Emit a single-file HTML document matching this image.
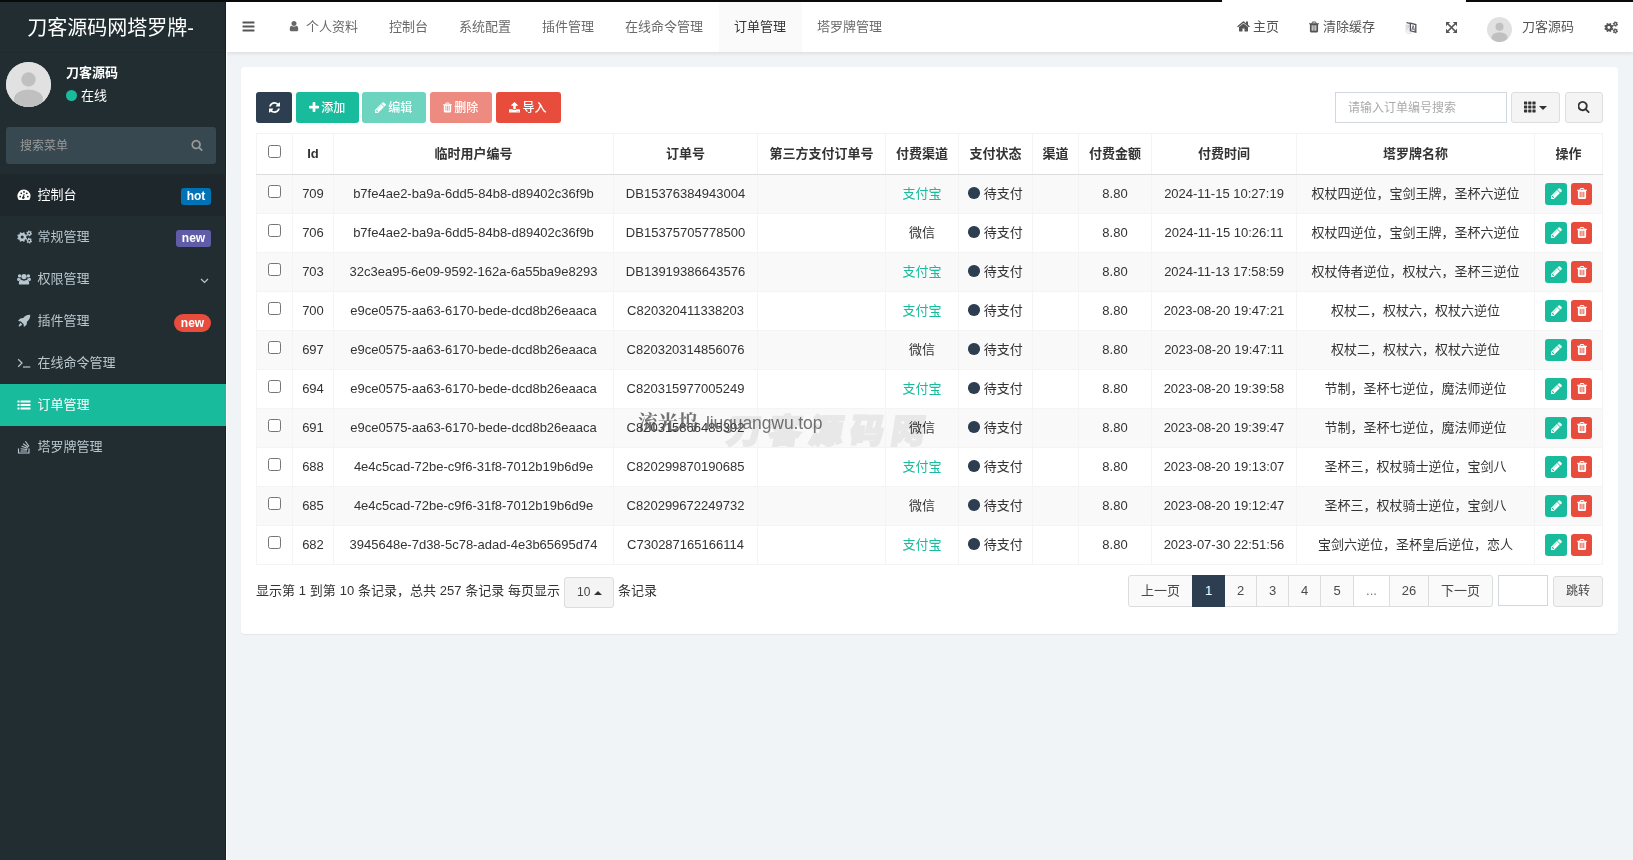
<!DOCTYPE html>
<html lang="zh-CN">
<head>
<meta charset="utf-8">
<title>订单管理</title>
<style>
*{box-sizing:border-box}
html,body{margin:0;padding:0}
body{width:1633px;height:860px;overflow:hidden;background:#f1f4f6;font-family:"Liberation Sans","Noto Sans CJK SC",sans-serif;font-size:13px;color:#333;position:relative;line-height:1.42857}
svg{display:block}
.abs{position:absolute}
/* sidebar */
#side{position:absolute;left:0;top:0;width:226px;height:860px;background:#222d32;color:#fff}
#logo{position:absolute;left:0;top:0;width:226px;height:52px;line-height:56px;text-align:center;font-size:20px;color:#fff;white-space:nowrap;padding-right:5px}
#avatar{position:absolute;left:6px;top:62px;width:45px;height:45px;border-radius:50%;background:#d8d8d8;overflow:hidden}
#uname{position:absolute;left:66px;top:64px;font-weight:bold;font-size:13px;color:#fff;white-space:nowrap}
#ustat{position:absolute;left:66px;top:87px;font-size:13px;color:#fff;white-space:nowrap}
#ustat i{display:inline-block;width:11px;height:11px;border-radius:50%;background:#18bc9c;margin-right:4px;vertical-align:-1px}
#msearch{position:absolute;left:6px;top:127px;width:210px;height:37px;border-radius:3px;background:#374850;color:#999;font-size:12px;line-height:39px;padding-left:14px}
#msearch svg{position:absolute;right:13px;top:12px}
.mi{position:absolute;left:0;width:226px;height:42px;line-height:42px;color:#b8c7ce;font-size:13px;white-space:nowrap}
.mi .ic{position:absolute;left:17px;top:14px;width:14px;height:14px}
.mi .tx{position:absolute;left:37.500px;top:0}
.mi.open{background:#1e282c;color:#fff}
.mi.act{background:#18bc9c;color:#fff}
.bdg{position:absolute;top:14px;height:17px;line-height:17px;font-size:12px;font-weight:bold;color:#fff;border-radius:3px;text-align:center}
/* header */
#hdr{position:absolute;left:226px;top:0;width:1407px;height:52px;background:#fff;box-shadow:0 1px 4px rgba(0,21,41,.12)}
.tab{position:absolute;top:2px;height:50px;line-height:49px;color:#6a6a6a;font-size:13px;white-space:nowrap}
.tab.on{background:#fafafa;color:#333}
.hr{position:absolute;top:2px;height:49px;line-height:50px;color:#555;font-size:13px;white-space:nowrap}
#blk1,#blk2{position:absolute;top:0;height:2px;background:#0a0a0a}
/* panel */
#panel{position:absolute;left:241px;top:67px;width:1377px;height:567px;background:#fff;border-radius:4px;box-shadow:0 1px 1px rgba(0,0,0,.05)}
.btn{position:absolute;top:92px;height:31px;border-radius:3px;color:#fff;font-size:12px;font-weight:500;line-height:33px;white-space:nowrap}
.btn svg{position:absolute}
.gb{background:#f4f4f4;border:1px solid #ddd;border-radius:3px}
#tb{position:absolute;left:256px;top:133px;width:1346px;table-layout:fixed;border-collapse:collapse;font-size:13px;color:#333}
#tb th,#tb td{border:1px solid #f4f4f4;text-align:center;vertical-align:middle;padding:0;white-space:nowrap;overflow:hidden}
#tb th{height:41px;font-weight:bold;color:#333;border-bottom:1px solid #ddd}
#tb td{height:39px}
#tb tbody tr:nth-child(odd){background:#f9f9f9}
.cb{display:inline-block;width:13px;height:13px;border:1px solid #767676;border-radius:2.500px;background:#fff;vertical-align:middle;position:relative;top:-3px}
.ali{color:#18bc9c}
.dot{display:inline-block;width:11.500px;height:11.500px;border-radius:50%;background:#2c3e50;margin-right:4px;vertical-align:-1px}
.ab{display:inline-block;width:22px;height:22px;border-radius:3px;vertical-align:middle;position:relative}
.ab svg{position:absolute;left:5.700px;top:4.700px}
.ab.ed{background:#18bc9c;margin-right:4px}
.ab.dl{background:#e74c3c;width:21px}
#pg span{position:absolute;top:575px;height:32px;border:1px solid #ddd;background:#fafafa;color:#4a4a4a;font-size:13px;line-height:30px;text-align:center;white-space:nowrap}
#pg span.cur{background:#2c3e50;border-color:#2c3e50;color:#fff;z-index:2}
</style>
</head>
<body>
<div id="side">
  <div class="abs" style="left:225px;top:0;width:1px;height:860px;background:#182024"></div>
  <div id="logo">刀客源码网塔罗牌-</div>
  <div id="avatar"><svg width="45" height="45" viewBox="0 0 45 45"><rect width="45" height="45" fill="#e1e1e1"/><circle cx="22.500" cy="17.500" r="7.200" fill="#c0c0c0"/><ellipse cx="22.500" cy="37" rx="14.500" ry="9.500" fill="#c0c0c0"/></svg></div>
  <div id="uname">刀客源码</div>
  <div id="ustat"><i></i>在线</div>
  <div id="msearch">搜索菜单<svg width="12" height="12" viewBox="0 0 1792 1792"><path fill="#999" d="M1216 832q0-185-131.500-316.500t-316.500-131.500-316.500 131.500-131.500 316.500 131.500 316.500 316.500 131.500 316.500-131.500 131.500-316.500zm512 832q0 52-38 90t-90 38q-54 0-90-38l-343-342q-179 124-399 124-143 0-273.500-55.500t-225-150-150-225-55.500-273.500 55.500-273.500 150-225 225-150 273.500-55.500 273.500 55.500 225 150 150 225 55.500 273.500q0 220-124 399l343 343q37 37 37 90z"/></svg></div>
  <div class="mi open" style="top:174px"><svg class="ic" viewBox="0 0 14 14"><path fill="currentColor" d="M7 1.500a6.500 6.500 0 0 1 6.500 6.500c0 1.400-.4 2.600-1.100 3.700a.6.600 0 0 1-.5.300H2.100a.6.600 0 0 1-.5-.3A6.500 6.500 0 0 1 7 1.500z"/><g fill="#1e282c"><circle cx="3.200" cy="8.600" r=".9"/><circle cx="4.300" cy="5.300" r=".9"/><circle cx="7" cy="3.900" r=".9"/><circle cx="9.700" cy="5.300" r=".9"/><circle cx="10.800" cy="8.600" r=".9"/><path d="M7.600 6.200l-.5 2.300a1.300 1.300 0 1 1-1-.2l.5-2.300z"/></g></svg><span class="tx">控制台</span><span class="bdg" style="left:181px;width:30px;background:#0073b7">hot</span></div>
  <div class="mi" style="top:216px"><svg class="ic" style="width:15px" viewBox="0 0 15 14"><path fill="currentColor" fill-rule="evenodd" d="M9.11 7.58L10.07 8.12L9.44 9.65L8.37 9.35L7.55 10.17L7.85 11.24L6.32 11.87L5.78 10.91L4.62 10.91L4.08 11.87L2.55 11.24L2.85 10.17L2.03 9.35L0.96 9.65L0.33 8.12L1.29 7.58L1.29 6.42L0.33 5.88L0.96 4.35L2.03 4.65L2.85 3.83L2.55 2.76L4.08 2.13L4.62 3.09L5.78 3.09L6.32 2.13L7.85 2.76L7.55 3.83L8.37 4.65L9.44 4.35L10.07 5.88L9.11 6.42ZM3.65 7.00a1.55 1.55 0 1 0 3.10 0a1.55 1.55 0 1 0 -3.10 0ZM14.35 3.24L15.09 3.52L14.71 4.75L13.94 4.56L13.33 5.13L13.45 5.92L12.20 6.20L11.98 5.44L11.18 5.19L10.56 5.69L9.69 4.75L10.24 4.18L10.05 3.36L9.31 3.08L9.69 1.85L10.46 2.04L11.07 1.47L10.95 0.68L12.20 0.40L12.42 1.16L13.22 1.41L13.84 0.91L14.71 1.85L14.16 2.42ZM11.35 3.30a0.85 0.85 0 1 0 1.70 0a0.85 0.85 0 1 0 -1.70 0ZM14.35 10.64L15.09 10.92L14.71 12.15L13.94 11.96L13.33 12.53L13.45 13.32L12.20 13.60L11.98 12.84L11.18 12.59L10.56 13.09L9.69 12.15L10.24 11.58L10.05 10.76L9.31 10.48L9.69 9.25L10.46 9.44L11.07 8.87L10.95 8.08L12.20 7.80L12.42 8.56L13.22 8.81L13.84 8.31L14.71 9.25L14.16 9.82ZM11.35 10.70a0.85 0.85 0 1 0 1.70 0a0.85 0.85 0 1 0 -1.70 0Z"/></svg><span class="tx">常规管理</span><span class="bdg" style="left:176px;width:35px;background:#605ca8">new</span></div>
  <div class="mi" style="top:258px"><svg class="ic" viewBox="0 0 14 14"><g fill="currentColor"><circle cx="7" cy="4.600" r="2.600"/><path d="M2.800 12.500c-.6 0-1-.4-1-1 0-2.200.7-4 2.200-4 .7.700 1.800 1.200 3 1.200s2.300-.5 3-1.200c1.500 0 2.200 1.800 2.200 4 0 .6-.4 1-1 1z"/><circle cx="2.600" cy="3.900" r="1.700"/><circle cx="11.400" cy="3.900" r="1.700"/><path d="M.1 7.800c0-1.200.4-2.100 1.200-2.100.4.400.9.600 1.400.6.300 0 .6-.1.900-.2-.1.400-.1.700-.1 1 0 .3 0 .5.100.8-.8 0-1.500.4-1.900 1H1c-.6 0-.9-.4-.9-1.100z"/><path d="M13.900 7.800c0-1.200-.4-2.100-1.200-2.100-.4.400-.9.600-1.400.6-.3 0-.6-.1-.9-.2.100.4.100.7.100 1 0 .3 0 .5-.1.800.8 0 1.500.4 1.900 1h.7c.6 0 .9-.4.900-1.100z"/></g></svg><span class="tx">权限管理</span><svg class="abs" style="left:199.500px;top:18.500px" width="9" height="8" viewBox="0 0 9 8"><path d="M1 2l3.500 3.500L8 2" stroke="#b8c7ce" stroke-width="1.200" fill="none"/></svg></div>
  <div class="mi" style="top:300px"><svg class="ic" viewBox="0 0 14 14"><path fill="currentColor" d="M13.200.8c.2 2.600-.8 5-3.200 7l-.4 3-2.700 2.200-.3-2.800-2.800-2.800L1 7.100l2.200-2.700 3-.4c2-2.400 4.400-3.400 7-3.200zM3.300 8.700l2 2-2.900 1.800c-.4.200-.9-.3-.7-.7z"/></svg><span class="tx">插件管理</span><span class="bdg" style="left:174px;width:37px;height:18px;line-height:18px;background:#e74c3c;border-radius:9px">new</span></div>
  <div class="mi" style="top:342px"><svg class="ic" viewBox="0 0 14 14"><path d="M1.200 3.300l3.800 3.700-3.800 3.700" stroke="currentColor" stroke-width="1.200" fill="none"/><path d="M6 11h7.300" stroke="currentColor" stroke-width="1.200"/></svg><span class="tx">在线命令管理</span></div>
  <div class="mi act" style="top:384px"><svg class="ic" viewBox="0 0 14 14"><g fill="currentColor"><rect x="0.500" y="2.500" width="2" height="2" rx=".3"/><rect x="0.500" y="6" width="2" height="2" rx=".3"/><rect x="0.500" y="9.500" width="2" height="2" rx=".3"/><rect x="3.500" y="2.500" width="10" height="2" rx=".3"/><rect x="3.500" y="6" width="10" height="2" rx=".3"/><rect x="3.500" y="9.500" width="10" height="2" rx=".3"/></g></svg><span class="tx">订单管理</span></div>
  <div class="mi" style="top:426px"><svg class="ic" viewBox="0 0 14 14"><g fill="none" stroke="currentColor" stroke-width="1.100"><path d="M1.500 8.500v4.500h10.500v-4.500"/><path d="M3.500 11h6.500M3.700 8.700l6.400.8M4.600 6.200l5.900 2.100M6.100 3.700l5.100 3.600M8.300 1.300l3.700 5.100"/></g></svg><span class="tx">塔罗牌管理</span></div>
</div>
<div id="hdr">
  <svg class="abs" style="left:16px;top:21px" width="13" height="11" viewBox="0 0 13 11"><g fill="#555"><rect x="0.500" y="0.600" width="12" height="1.900" rx=".4"/><rect x="0.500" y="4.600" width="12" height="1.900" rx=".4"/><rect x="0.500" y="8.600" width="12" height="1.900" rx=".4"/></g></svg>
  <div class="tab" style="left:49px;width:98px"><svg class="abs" style="left:14px;top:19px" width="10" height="11" viewBox="0 0 1408 1664"><path fill="#666" transform="translate(-192,-128)" d="M1536 1399q0 109-62.500 187t-150.500 78h-854q-88 0-150.500-78t-62.500-187q0-85 8.500-160.500t31.500-152 58.500-131 94-89 134.500-34.500q131 128 313 128t313-128q76 0 134.500 34.500t94 89 58.500 131 31.500 152 8.500 160.500zm-256-887q0 159-112.500 271.500t-271.500 112.500-271.500-112.500-112.500-271.500 112.500-271.500 271.500-112.500 271.500 112.500 112.500 271.500z"/></svg><span class="abs" style="left:31px">个人资料</span></div>
  <div class="tab" style="left:148px;width:69px;padding-left:15px">控制台</div>
  <div class="tab" style="left:218px;width:82px;padding-left:15px">系统配置</div>
  <div class="tab" style="left:301px;width:82px;padding-left:15px">插件管理</div>
  <div class="tab" style="left:384px;width:108px;padding-left:15px">在线命令管理</div>
  <div class="tab on" style="left:493px;width:83px;padding-left:15px">订单管理</div>
  <div class="tab" style="left:576px;width:95px;padding-left:15px">塔罗牌管理</div>
  <!-- right -->
  <div class="hr" style="left:1011px"><svg class="abs" style="left:0;top:19px" width="13" height="11" viewBox="0 0 1664 1312"><path fill="#555" transform="translate(-64,-256)" d="M1472 992v480q0 26-19 45t-45 19h-384v-384h-256v384h-384q-26 0-45-19t-19-45v-480q0-1 .5-3t.5-3l575-474 575 474q1 2 1 6zm223-69l-62 74q-8 9-21 11h-3q-13 0-21-7l-692-577-692 577q-12 8-24 7-13-2-21-11l-62-74q-8-10-7-23.500t11-21.500l719-599q32-26 76-26t76 26l244 204v-195q0-14 9-23t23-9h192q14 0 23 9t9 23v408l219 182q10 8 11 21.500t-7 23.500z"/></svg><span class="abs" style="left:16px">主页</span></div>
  <div class="hr" style="left:1083px"><svg class="abs" style="left:0;top:19px" width="10" height="12" viewBox="0 0 1408 1536"><path fill="#555" transform="translate(-192,-128)" d="M704 1376v-704q0-14-9-23t-23-9h-64q-14 0-23 9t-9 23v704q0 14 9 23t23 9h64q14 0 23-9t9-23zm256 0v-704q0-14-9-23t-23-9h-64q-14 0-23 9t-9 23v704q0 14 9 23t23 9h64q14 0 23-9t9-23zm256 0v-704q0-14-9-23t-23-9h-64q-14 0-23 9t-9 23v704q0 14 9 23t23 9h64q14 0 23-9t9-23zm-544-992h448l-48-117q-7-9-17-11h-317q-10 2-17 11zm928 32v64q0 14-9 23t-23 9h-96v948q0 83-47 143.500t-113 60.500h-832q-66 0-113-58.500t-47-141.500v-952h-96q-14 0-23-9t-9-23v-64q0-14 9-23t23-9h309l70-167q15-37 54-63t79-26h320q40 0 79 26t54 63l70 167h309q14 0 23 9t9 23z"/></svg><span class="abs" style="left:14px">清除缓存</span></div>
  <svg class="abs" style="left:1178px;top:21px" width="13" height="13" viewBox="0 0 13 13"><path d="M1 3.500l5-1v8.500l-5 .8z" fill="#eceef3"/><path d="M2.500 0.800l3.800 1.300v1.200l-3.800-1z" fill="#666"/><path d="M2.400 8.500c1.300-.8 2-2 2.300-3.500M2 5h3.200" stroke="#b9bfd0" stroke-width=".8" fill="none"/><path d="M6.400 2.200l5.400 1.400v7.600l-5.400-1.400z" fill="#fff" stroke="#555" stroke-width="1.300"/><path d="M7.700 9.300l1.400-4.800 1.500 5.200M8.200 7.800l1.900.5" stroke="#667" stroke-width=".9" fill="none"/><path d="M3 12.200h4l1.200-1" stroke="#ccd" stroke-width=".7" fill="none"/></svg>
  <svg class="abs" style="left:1220px;top:22px" width="11" height="11" viewBox="0 0 11 11"><g fill="#555"><path d="M0 0h4.200l-4.200 4.200z"/><path d="M11 0v4.200l-4.200-4.200z"/><path d="M0 11v-4.200l4.200 4.200z"/><path d="M11 11h-4.200l4.200-4.200z"/></g><path d="M2 2l7 7M9 2l-7 7" stroke="#555" stroke-width="1.700"/></svg>
  <div class="abs" style="left:1261px;top:17px;width:25px;height:25px;border-radius:50%;overflow:hidden"><svg width="25" height="25" viewBox="0 0 45 45"><rect width="45" height="45" fill="#e1e1e1"/><circle cx="22.500" cy="17.500" r="7.200" fill="#c0c0c0"/><ellipse cx="22.500" cy="37" rx="14.500" ry="9.500" fill="#c0c0c0"/></svg></div>
  <div class="hr" style="left:1296px">刀客源码</div>
  <svg class="abs" style="left:1378px;top:21px" width="14" height="13" viewBox="0 0 15 14"><path fill="#555" fill-rule="evenodd" d="M9.11 7.58L10.07 8.12L9.44 9.65L8.37 9.35L7.55 10.17L7.85 11.24L6.32 11.87L5.78 10.91L4.62 10.91L4.08 11.87L2.55 11.24L2.85 10.17L2.03 9.35L0.96 9.65L0.33 8.12L1.29 7.58L1.29 6.42L0.33 5.88L0.96 4.35L2.03 4.65L2.85 3.83L2.55 2.76L4.08 2.13L4.62 3.09L5.78 3.09L6.32 2.13L7.85 2.76L7.55 3.83L8.37 4.65L9.44 4.35L10.07 5.88L9.11 6.42ZM3.65 7.00a1.55 1.55 0 1 0 3.10 0a1.55 1.55 0 1 0 -3.10 0ZM14.35 3.24L15.09 3.52L14.71 4.75L13.94 4.56L13.33 5.13L13.45 5.92L12.20 6.20L11.98 5.44L11.18 5.19L10.56 5.69L9.69 4.75L10.24 4.18L10.05 3.36L9.31 3.08L9.69 1.85L10.46 2.04L11.07 1.47L10.95 0.68L12.20 0.40L12.42 1.16L13.22 1.41L13.84 0.91L14.71 1.85L14.16 2.42ZM11.35 3.30a0.85 0.85 0 1 0 1.70 0a0.85 0.85 0 1 0 -1.70 0ZM14.35 10.64L15.09 10.92L14.71 12.15L13.94 11.96L13.33 12.53L13.45 13.32L12.20 13.60L11.98 12.84L11.18 12.59L10.56 13.09L9.69 12.15L10.24 11.58L10.05 10.76L9.31 10.48L9.69 9.25L10.46 9.44L11.07 8.87L10.95 8.08L12.20 7.80L12.42 8.56L13.22 8.81L13.84 8.31L14.71 9.25L14.16 9.82ZM11.35 10.70a0.85 0.85 0 1 0 1.70 0a0.85 0.85 0 1 0 -1.70 0Z"/></svg>
</div>
<div class="abs" style="left:0;top:52px;width:225px;height:1px;background:rgba(0,0,0,.07)"></div>
<div class="abs" style="left:226px;top:52px;width:1px;height:808px;background:#fff"></div>
<div id="blk1" style="left:0;width:1222px"></div>
<div id="blk2" style="left:1466px;width:167px"></div>
<div id="panel"></div>
<div class="btn" style="left:256px;width:36px;background:#2c3e50"><svg style="left:12.500px;top:9.500px" width="11" height="11" viewBox="0 0 1536 1536"><path fill="#fff" transform="translate(-128,-128)" d="M1639 1056q0 5-1 7-64 268-268 434.500t-478 166.500q-146 0-282.500-55t-243.500-157l-129 129q-19 19-45 19t-45-19-19-45v-448q0-26 19-45t45-19h448q26 0 45 19t19 45-19 45l-137 137q71 66 161 102t187 36q134 0 250-65t186-179q11-17 53-117 8-23 30-23h192q13 0 22.500 9.500t9.500 22.500zm25-800v448q0 26-19 45t-45 19h-448q-26 0-45-19t-19-45 19-45l138-138q-148-137-349-137-134 0-250 65t-186 179q-11 17-53 117-8 23-30 23h-199q-13 0-22.500-9.500t-9.500-22.500v-7q65-268 270-434.500t480-166.500q146 0 284 55.500t245 156.500l130-129q19-19 45-19t45 19 19 45z"/></svg></div>
<div class="btn" style="left:296px;width:63px;background:#18bc9c"><svg style="left:13px;top:10px" width="10" height="11" viewBox="0 0 1408 1408"><path fill="#fff" transform="translate(-192,-192)" d="M1600 736v192q0 40-28 68t-68 28h-416v416q0 40-28 68t-68 28h-192q-40 0-68-28t-28-68v-416h-416q-40 0-68-28t-28-68v-192q0-40 28-68t68-28h416v-416q0-40 28-68t68-28h192q40 0 68 28t28 68v416h416q40 0 68 28t28 68z"/></svg><span class="abs" style="left:25.300px">添加</span></div>
<div class="btn" style="left:362px;width:64px;background:#6dd4c0"><svg style="left:13px;top:10px" width="11" height="11" viewBox="0 0 1536 1536"><path fill="#fff" transform="translate(-128,-128)" d="M491 1536l91-91-235-235-91 91v107h128v128h107zm523-928q0-22-22-22-10 0-17 7l-542 542q-7 7-7 17 0 22 22 22 10 0 17-7l542-542q7-7 7-17zm-54-192l416 416-832 832h-416v-416zm683 96q0 53-37 90l-166 166-416-416 166-165q36-38 90-38 53 0 91 38l235 234q37 39 37 91z"/></svg><span class="abs" style="left:26.300px">编辑</span></div>
<div class="btn" style="left:430px;width:62px;background:#ee8b81"><svg style="left:13px;top:10px" width="9" height="11" viewBox="0 0 1408 1536"><path fill="#fff" transform="translate(-192,-128)" d="M704 1376v-704q0-14-9-23t-23-9h-64q-14 0-23 9t-9 23v704q0 14 9 23t23 9h64q14 0 23-9t9-23zm256 0v-704q0-14-9-23t-23-9h-64q-14 0-23 9t-9 23v704q0 14 9 23t23 9h64q14 0 23-9t9-23zm256 0v-704q0-14-9-23t-23-9h-64q-14 0-23 9t-9 23v704q0 14 9 23t23 9h64q14 0 23-9t9-23zm-544-992h448l-48-117q-7-9-17-11h-317q-10 2-17 11zm928 32v64q0 14-9 23t-23 9h-96v948q0 83-47 143.500t-113 60.500h-832q-66 0-113-58.500t-47-141.500v-952h-96q-14 0-23-9t-9-23v-64q0-14 9-23t23-9h309l70-167q15-37 54-63t79-26h320q40 0 79 26t54 63l70 167h309q14 0 23 9t9 23z"/></svg><span class="abs" style="left:24.300px">删除</span></div>
<div class="btn" style="left:496px;width:65px;background:#e74c3c"><svg style="left:13px;top:10px" width="11" height="11" viewBox="0 0 1664 1664"><path fill="#fff" transform="translate(-64,-64)" d="M1344 1472q0-26-19-45t-45-19-45 19-19 45 19 45 45 19 45-19 19-45zm256 0q0-26-19-45t-45-19-45 19-19 45 19 45 45 19 45-19 19-45zm128-224v320q0 40-28 68t-68 28h-1472q-40 0-68-28t-28-68v-320q0-40 28-68t68-28h427q21 56 70.500 92t110.500 36h256q61 0 110.500-36t70.500-92h427q40 0 68 28t28 68zm-325-648q-17 40-59 40h-256v448q0 26-19 45t-45 19h-256q-26 0-45-19t-19-45v-448h-256q-42 0-59-40-17-39 14-69l448-448q18-19 45-19t45 19l448 448q31 30 14 69z"/></svg><span class="abs" style="left:26.500px">导入</span></div>
<div class="abs" style="left:1335px;top:92px;width:172px;height:31px;border:1px solid #d2d6de;background:#fff;color:#aaa;font-size:12px;line-height:31px;padding-left:12px;white-space:nowrap">请输入订单编号搜索</div>
<div class="abs gb" style="left:1511px;top:92px;width:49px;height:31px"><svg class="abs" style="left:12px;top:8px" width="12" height="12" viewBox="0 0 12 12"><g fill="#333"><rect x="0" y="0.500" width="3.200" height="3" rx=".4"/><rect x="4.200" y="0.500" width="3.200" height="3" rx=".4"/><rect x="8.400" y="0.500" width="3.200" height="3" rx=".4"/><rect x="0" y="4.500" width="3.200" height="3" rx=".4"/><rect x="4.200" y="4.500" width="3.200" height="3" rx=".4"/><rect x="8.400" y="4.500" width="3.200" height="3" rx=".4"/><rect x="0" y="8.500" width="3.200" height="3" rx=".4"/><rect x="4.200" y="8.500" width="3.200" height="3" rx=".4"/><rect x="8.400" y="8.500" width="3.200" height="3" rx=".4"/></g></svg><svg class="abs" style="left:27px;top:13px" width="8" height="4" viewBox="0 0 8 4"><path d="M0 0h8l-4 4z" fill="#333"/></svg></div>
<div class="abs gb" style="left:1565px;top:92px;width:38px;height:31px"><svg class="abs" style="left:12px;top:8px" width="12" height="12" viewBox="0 0 1664 1664"><path fill="#333" transform="translate(-128,-128)" d="M1216 832q0-185-131.500-316.500t-316.500-131.500-316.500 131.500-131.500 316.500 131.500 316.500 316.500 131.500 316.500-131.500 131.500-316.500zm512 832q0 52-38 90t-90 38q-54 0-90-38l-343-342q-179 124-399 124-143 0-273.500-55.500t-225-150-150-225-55.500-273.500 55.500-273.500 150-225 225-150 273.500-55.500 273.500 55.500 225 150 150 225 55.500 273.500q0 220-124 399l343 343q37 37 37 90z"/></svg></div>
<table id="tb"><colgroup><col style="width:36px"><col style="width:41px"><col style="width:280px"><col style="width:144px"><col style="width:128px"><col style="width:73px"><col style="width:74px"><col style="width:46px"><col style="width:73px"><col style="width:145px"><col style="width:238px"><col style="width:68px"></colgroup>
<thead><tr><th><span class="cb"></span></th><th>Id</th><th>临时用户编号</th><th>订单号</th><th>第三方支付订单号</th><th>付费渠道</th><th>支付状态</th><th>渠道</th><th>付费金额</th><th>付费时间</th><th>塔罗牌名称</th><th>操作</th></tr></thead><tbody>
<tr><td><span class="cb"></span></td><td>709</td><td>b7fe4ae2-ba9a-6dd5-84b8-d89402c36f9b</td><td>DB15376384943004</td><td></td><td><span class="ali">支付宝</span></td><td><i class="dot"></i>待支付</td><td></td><td>8.80</td><td>2024-11-15 10:27:19</td><td>权杖四逆位，宝剑王牌，圣杯六逆位</td><td><span class="ab ed"><svg width="11" height="11" viewBox="0 0 1536 1536"><path fill="#fff" transform="translate(-128,-128)" d="M491 1536l91-91-235-235-91 91v107h128v128h107zm523-928q0-22-22-22-10 0-17 7l-542 542q-7 7-7 17 0 22 22 22 10 0 17-7l542-542q7-7 7-17zm-54-192l416 416-832 832h-416v-416zm683 96q0 53-37 90l-166 166-416-416 166-165q36-38 90-38 53 0 91 38l235 234q37 39 37 91z"/></svg></span><span class="ab dl"><svg width="10" height="11" viewBox="0 0 1408 1536"><path fill="#fff" transform="translate(-192,-128)" d="M704 1376v-704q0-14-9-23t-23-9h-64q-14 0-23 9t-9 23v704q0 14 9 23t23 9h64q14 0 23-9t9-23zm256 0v-704q0-14-9-23t-23-9h-64q-14 0-23 9t-9 23v704q0 14 9 23t23 9h64q14 0 23-9t9-23zm256 0v-704q0-14-9-23t-23-9h-64q-14 0-23 9t-9 23v704q0 14 9 23t23 9h64q14 0 23-9t9-23zm-544-992h448l-48-117q-7-9-17-11h-317q-10 2-17 11zm928 32v64q0 14-9 23t-23 9h-96v948q0 83-47 143.500t-113 60.500h-832q-66 0-113-58.500t-47-141.500v-952h-96q-14 0-23-9t-9-23v-64q0-14 9-23t23-9h309l70-167q15-37 54-63t79-26h320q40 0 79 26t54 63l70 167h309q14 0 23 9t9 23z"/></svg></span></td></tr>
<tr><td><span class="cb"></span></td><td>706</td><td>b7fe4ae2-ba9a-6dd5-84b8-d89402c36f9b</td><td>DB15375705778500</td><td></td><td>微信</td><td><i class="dot"></i>待支付</td><td></td><td>8.80</td><td>2024-11-15 10:26:11</td><td>权杖四逆位，宝剑王牌，圣杯六逆位</td><td><span class="ab ed"><svg width="11" height="11" viewBox="0 0 1536 1536"><path fill="#fff" transform="translate(-128,-128)" d="M491 1536l91-91-235-235-91 91v107h128v128h107zm523-928q0-22-22-22-10 0-17 7l-542 542q-7 7-7 17 0 22 22 22 10 0 17-7l542-542q7-7 7-17zm-54-192l416 416-832 832h-416v-416zm683 96q0 53-37 90l-166 166-416-416 166-165q36-38 90-38 53 0 91 38l235 234q37 39 37 91z"/></svg></span><span class="ab dl"><svg width="10" height="11" viewBox="0 0 1408 1536"><path fill="#fff" transform="translate(-192,-128)" d="M704 1376v-704q0-14-9-23t-23-9h-64q-14 0-23 9t-9 23v704q0 14 9 23t23 9h64q14 0 23-9t9-23zm256 0v-704q0-14-9-23t-23-9h-64q-14 0-23 9t-9 23v704q0 14 9 23t23 9h64q14 0 23-9t9-23zm256 0v-704q0-14-9-23t-23-9h-64q-14 0-23 9t-9 23v704q0 14 9 23t23 9h64q14 0 23-9t9-23zm-544-992h448l-48-117q-7-9-17-11h-317q-10 2-17 11zm928 32v64q0 14-9 23t-23 9h-96v948q0 83-47 143.500t-113 60.500h-832q-66 0-113-58.500t-47-141.500v-952h-96q-14 0-23-9t-9-23v-64q0-14 9-23t23-9h309l70-167q15-37 54-63t79-26h320q40 0 79 26t54 63l70 167h309q14 0 23 9t9 23z"/></svg></span></td></tr>
<tr><td><span class="cb"></span></td><td>703</td><td>32c3ea95-6e09-9592-162a-6a55ba9e8293</td><td>DB13919386643576</td><td></td><td><span class="ali">支付宝</span></td><td><i class="dot"></i>待支付</td><td></td><td>8.80</td><td>2024-11-13 17:58:59</td><td>权杖侍者逆位，权杖六，圣杯三逆位</td><td><span class="ab ed"><svg width="11" height="11" viewBox="0 0 1536 1536"><path fill="#fff" transform="translate(-128,-128)" d="M491 1536l91-91-235-235-91 91v107h128v128h107zm523-928q0-22-22-22-10 0-17 7l-542 542q-7 7-7 17 0 22 22 22 10 0 17-7l542-542q7-7 7-17zm-54-192l416 416-832 832h-416v-416zm683 96q0 53-37 90l-166 166-416-416 166-165q36-38 90-38 53 0 91 38l235 234q37 39 37 91z"/></svg></span><span class="ab dl"><svg width="10" height="11" viewBox="0 0 1408 1536"><path fill="#fff" transform="translate(-192,-128)" d="M704 1376v-704q0-14-9-23t-23-9h-64q-14 0-23 9t-9 23v704q0 14 9 23t23 9h64q14 0 23-9t9-23zm256 0v-704q0-14-9-23t-23-9h-64q-14 0-23 9t-9 23v704q0 14 9 23t23 9h64q14 0 23-9t9-23zm256 0v-704q0-14-9-23t-23-9h-64q-14 0-23 9t-9 23v704q0 14 9 23t23 9h64q14 0 23-9t9-23zm-544-992h448l-48-117q-7-9-17-11h-317q-10 2-17 11zm928 32v64q0 14-9 23t-23 9h-96v948q0 83-47 143.500t-113 60.500h-832q-66 0-113-58.500t-47-141.500v-952h-96q-14 0-23-9t-9-23v-64q0-14 9-23t23-9h309l70-167q15-37 54-63t79-26h320q40 0 79 26t54 63l70 167h309q14 0 23 9t9 23z"/></svg></span></td></tr>
<tr><td><span class="cb"></span></td><td>700</td><td>e9ce0575-aa63-6170-bede-dcd8b26eaaca</td><td>C820320411338203</td><td></td><td><span class="ali">支付宝</span></td><td><i class="dot"></i>待支付</td><td></td><td>8.80</td><td>2023-08-20 19:47:21</td><td>权杖二，权杖六，权杖六逆位</td><td><span class="ab ed"><svg width="11" height="11" viewBox="0 0 1536 1536"><path fill="#fff" transform="translate(-128,-128)" d="M491 1536l91-91-235-235-91 91v107h128v128h107zm523-928q0-22-22-22-10 0-17 7l-542 542q-7 7-7 17 0 22 22 22 10 0 17-7l542-542q7-7 7-17zm-54-192l416 416-832 832h-416v-416zm683 96q0 53-37 90l-166 166-416-416 166-165q36-38 90-38 53 0 91 38l235 234q37 39 37 91z"/></svg></span><span class="ab dl"><svg width="10" height="11" viewBox="0 0 1408 1536"><path fill="#fff" transform="translate(-192,-128)" d="M704 1376v-704q0-14-9-23t-23-9h-64q-14 0-23 9t-9 23v704q0 14 9 23t23 9h64q14 0 23-9t9-23zm256 0v-704q0-14-9-23t-23-9h-64q-14 0-23 9t-9 23v704q0 14 9 23t23 9h64q14 0 23-9t9-23zm256 0v-704q0-14-9-23t-23-9h-64q-14 0-23 9t-9 23v704q0 14 9 23t23 9h64q14 0 23-9t9-23zm-544-992h448l-48-117q-7-9-17-11h-317q-10 2-17 11zm928 32v64q0 14-9 23t-23 9h-96v948q0 83-47 143.500t-113 60.500h-832q-66 0-113-58.500t-47-141.500v-952h-96q-14 0-23-9t-9-23v-64q0-14 9-23t23-9h309l70-167q15-37 54-63t79-26h320q40 0 79 26t54 63l70 167h309q14 0 23 9t9 23z"/></svg></span></td></tr>
<tr><td><span class="cb"></span></td><td>697</td><td>e9ce0575-aa63-6170-bede-dcd8b26eaaca</td><td>C820320314856076</td><td></td><td>微信</td><td><i class="dot"></i>待支付</td><td></td><td>8.80</td><td>2023-08-20 19:47:11</td><td>权杖二，权杖六，权杖六逆位</td><td><span class="ab ed"><svg width="11" height="11" viewBox="0 0 1536 1536"><path fill="#fff" transform="translate(-128,-128)" d="M491 1536l91-91-235-235-91 91v107h128v128h107zm523-928q0-22-22-22-10 0-17 7l-542 542q-7 7-7 17 0 22 22 22 10 0 17-7l542-542q7-7 7-17zm-54-192l416 416-832 832h-416v-416zm683 96q0 53-37 90l-166 166-416-416 166-165q36-38 90-38 53 0 91 38l235 234q37 39 37 91z"/></svg></span><span class="ab dl"><svg width="10" height="11" viewBox="0 0 1408 1536"><path fill="#fff" transform="translate(-192,-128)" d="M704 1376v-704q0-14-9-23t-23-9h-64q-14 0-23 9t-9 23v704q0 14 9 23t23 9h64q14 0 23-9t9-23zm256 0v-704q0-14-9-23t-23-9h-64q-14 0-23 9t-9 23v704q0 14 9 23t23 9h64q14 0 23-9t9-23zm256 0v-704q0-14-9-23t-23-9h-64q-14 0-23 9t-9 23v704q0 14 9 23t23 9h64q14 0 23-9t9-23zm-544-992h448l-48-117q-7-9-17-11h-317q-10 2-17 11zm928 32v64q0 14-9 23t-23 9h-96v948q0 83-47 143.500t-113 60.500h-832q-66 0-113-58.500t-47-141.500v-952h-96q-14 0-23-9t-9-23v-64q0-14 9-23t23-9h309l70-167q15-37 54-63t79-26h320q40 0 79 26t54 63l70 167h309q14 0 23 9t9 23z"/></svg></span></td></tr>
<tr><td><span class="cb"></span></td><td>694</td><td>e9ce0575-aa63-6170-bede-dcd8b26eaaca</td><td>C820315977005249</td><td></td><td><span class="ali">支付宝</span></td><td><i class="dot"></i>待支付</td><td></td><td>8.80</td><td>2023-08-20 19:39:58</td><td>节制，圣杯七逆位，魔法师逆位</td><td><span class="ab ed"><svg width="11" height="11" viewBox="0 0 1536 1536"><path fill="#fff" transform="translate(-128,-128)" d="M491 1536l91-91-235-235-91 91v107h128v128h107zm523-928q0-22-22-22-10 0-17 7l-542 542q-7 7-7 17 0 22 22 22 10 0 17-7l542-542q7-7 7-17zm-54-192l416 416-832 832h-416v-416zm683 96q0 53-37 90l-166 166-416-416 166-165q36-38 90-38 53 0 91 38l235 234q37 39 37 91z"/></svg></span><span class="ab dl"><svg width="10" height="11" viewBox="0 0 1408 1536"><path fill="#fff" transform="translate(-192,-128)" d="M704 1376v-704q0-14-9-23t-23-9h-64q-14 0-23 9t-9 23v704q0 14 9 23t23 9h64q14 0 23-9t9-23zm256 0v-704q0-14-9-23t-23-9h-64q-14 0-23 9t-9 23v704q0 14 9 23t23 9h64q14 0 23-9t9-23zm256 0v-704q0-14-9-23t-23-9h-64q-14 0-23 9t-9 23v704q0 14 9 23t23 9h64q14 0 23-9t9-23zm-544-992h448l-48-117q-7-9-17-11h-317q-10 2-17 11zm928 32v64q0 14-9 23t-23 9h-96v948q0 83-47 143.500t-113 60.500h-832q-66 0-113-58.500t-47-141.500v-952h-96q-14 0-23-9t-9-23v-64q0-14 9-23t23-9h309l70-167q15-37 54-63t79-26h320q40 0 79 26t54 63l70 167h309q14 0 23 9t9 23z"/></svg></span></td></tr>
<tr><td><span class="cb"></span></td><td>691</td><td>e9ce0575-aa63-6170-bede-dcd8b26eaaca</td><td>C820315866485392</td><td></td><td>微信</td><td><i class="dot"></i>待支付</td><td></td><td>8.80</td><td>2023-08-20 19:39:47</td><td>节制，圣杯七逆位，魔法师逆位</td><td><span class="ab ed"><svg width="11" height="11" viewBox="0 0 1536 1536"><path fill="#fff" transform="translate(-128,-128)" d="M491 1536l91-91-235-235-91 91v107h128v128h107zm523-928q0-22-22-22-10 0-17 7l-542 542q-7 7-7 17 0 22 22 22 10 0 17-7l542-542q7-7 7-17zm-54-192l416 416-832 832h-416v-416zm683 96q0 53-37 90l-166 166-416-416 166-165q36-38 90-38 53 0 91 38l235 234q37 39 37 91z"/></svg></span><span class="ab dl"><svg width="10" height="11" viewBox="0 0 1408 1536"><path fill="#fff" transform="translate(-192,-128)" d="M704 1376v-704q0-14-9-23t-23-9h-64q-14 0-23 9t-9 23v704q0 14 9 23t23 9h64q14 0 23-9t9-23zm256 0v-704q0-14-9-23t-23-9h-64q-14 0-23 9t-9 23v704q0 14 9 23t23 9h64q14 0 23-9t9-23zm256 0v-704q0-14-9-23t-23-9h-64q-14 0-23 9t-9 23v704q0 14 9 23t23 9h64q14 0 23-9t9-23zm-544-992h448l-48-117q-7-9-17-11h-317q-10 2-17 11zm928 32v64q0 14-9 23t-23 9h-96v948q0 83-47 143.500t-113 60.500h-832q-66 0-113-58.500t-47-141.500v-952h-96q-14 0-23-9t-9-23v-64q0-14 9-23t23-9h309l70-167q15-37 54-63t79-26h320q40 0 79 26t54 63l70 167h309q14 0 23 9t9 23z"/></svg></span></td></tr>
<tr><td><span class="cb"></span></td><td>688</td><td>4e4c5cad-72be-c9f6-31f8-7012b19b6d9e</td><td>C820299870190685</td><td></td><td><span class="ali">支付宝</span></td><td><i class="dot"></i>待支付</td><td></td><td>8.80</td><td>2023-08-20 19:13:07</td><td>圣杯三，权杖骑士逆位，宝剑八</td><td><span class="ab ed"><svg width="11" height="11" viewBox="0 0 1536 1536"><path fill="#fff" transform="translate(-128,-128)" d="M491 1536l91-91-235-235-91 91v107h128v128h107zm523-928q0-22-22-22-10 0-17 7l-542 542q-7 7-7 17 0 22 22 22 10 0 17-7l542-542q7-7 7-17zm-54-192l416 416-832 832h-416v-416zm683 96q0 53-37 90l-166 166-416-416 166-165q36-38 90-38 53 0 91 38l235 234q37 39 37 91z"/></svg></span><span class="ab dl"><svg width="10" height="11" viewBox="0 0 1408 1536"><path fill="#fff" transform="translate(-192,-128)" d="M704 1376v-704q0-14-9-23t-23-9h-64q-14 0-23 9t-9 23v704q0 14 9 23t23 9h64q14 0 23-9t9-23zm256 0v-704q0-14-9-23t-23-9h-64q-14 0-23 9t-9 23v704q0 14 9 23t23 9h64q14 0 23-9t9-23zm256 0v-704q0-14-9-23t-23-9h-64q-14 0-23 9t-9 23v704q0 14 9 23t23 9h64q14 0 23-9t9-23zm-544-992h448l-48-117q-7-9-17-11h-317q-10 2-17 11zm928 32v64q0 14-9 23t-23 9h-96v948q0 83-47 143.500t-113 60.500h-832q-66 0-113-58.500t-47-141.500v-952h-96q-14 0-23-9t-9-23v-64q0-14 9-23t23-9h309l70-167q15-37 54-63t79-26h320q40 0 79 26t54 63l70 167h309q14 0 23 9t9 23z"/></svg></span></td></tr>
<tr><td><span class="cb"></span></td><td>685</td><td>4e4c5cad-72be-c9f6-31f8-7012b19b6d9e</td><td>C820299672249732</td><td></td><td>微信</td><td><i class="dot"></i>待支付</td><td></td><td>8.80</td><td>2023-08-20 19:12:47</td><td>圣杯三，权杖骑士逆位，宝剑八</td><td><span class="ab ed"><svg width="11" height="11" viewBox="0 0 1536 1536"><path fill="#fff" transform="translate(-128,-128)" d="M491 1536l91-91-235-235-91 91v107h128v128h107zm523-928q0-22-22-22-10 0-17 7l-542 542q-7 7-7 17 0 22 22 22 10 0 17-7l542-542q7-7 7-17zm-54-192l416 416-832 832h-416v-416zm683 96q0 53-37 90l-166 166-416-416 166-165q36-38 90-38 53 0 91 38l235 234q37 39 37 91z"/></svg></span><span class="ab dl"><svg width="10" height="11" viewBox="0 0 1408 1536"><path fill="#fff" transform="translate(-192,-128)" d="M704 1376v-704q0-14-9-23t-23-9h-64q-14 0-23 9t-9 23v704q0 14 9 23t23 9h64q14 0 23-9t9-23zm256 0v-704q0-14-9-23t-23-9h-64q-14 0-23 9t-9 23v704q0 14 9 23t23 9h64q14 0 23-9t9-23zm256 0v-704q0-14-9-23t-23-9h-64q-14 0-23 9t-9 23v704q0 14 9 23t23 9h64q14 0 23-9t9-23zm-544-992h448l-48-117q-7-9-17-11h-317q-10 2-17 11zm928 32v64q0 14-9 23t-23 9h-96v948q0 83-47 143.500t-113 60.500h-832q-66 0-113-58.500t-47-141.500v-952h-96q-14 0-23-9t-9-23v-64q0-14 9-23t23-9h309l70-167q15-37 54-63t79-26h320q40 0 79 26t54 63l70 167h309q14 0 23 9t9 23z"/></svg></span></td></tr>
<tr><td><span class="cb"></span></td><td>682</td><td>3945648e-7d38-5c78-adad-4e3b65695d74</td><td>C730287165166114</td><td></td><td><span class="ali">支付宝</span></td><td><i class="dot"></i>待支付</td><td></td><td>8.80</td><td>2023-07-30 22:51:56</td><td>宝剑六逆位，圣杯皇后逆位，恋人</td><td><span class="ab ed"><svg width="11" height="11" viewBox="0 0 1536 1536"><path fill="#fff" transform="translate(-128,-128)" d="M491 1536l91-91-235-235-91 91v107h128v128h107zm523-928q0-22-22-22-10 0-17 7l-542 542q-7 7-7 17 0 22 22 22 10 0 17-7l542-542q7-7 7-17zm-54-192l416 416-832 832h-416v-416zm683 96q0 53-37 90l-166 166-416-416 166-165q36-38 90-38 53 0 91 38l235 234q37 39 37 91z"/></svg></span><span class="ab dl"><svg width="10" height="11" viewBox="0 0 1408 1536"><path fill="#fff" transform="translate(-192,-128)" d="M704 1376v-704q0-14-9-23t-23-9h-64q-14 0-23 9t-9 23v704q0 14 9 23t23 9h64q14 0 23-9t9-23zm256 0v-704q0-14-9-23t-23-9h-64q-14 0-23 9t-9 23v704q0 14 9 23t23 9h64q14 0 23-9t9-23zm256 0v-704q0-14-9-23t-23-9h-64q-14 0-23 9t-9 23v704q0 14 9 23t23 9h64q14 0 23-9t9-23zm-544-992h448l-48-117q-7-9-17-11h-317q-10 2-17 11zm928 32v64q0 14-9 23t-23 9h-96v948q0 83-47 143.500t-113 60.500h-832q-66 0-113-58.500t-47-141.500v-952h-96q-14 0-23-9t-9-23v-64q0-14 9-23t23-9h309l70-167q15-37 54-63t79-26h320q40 0 79 26t54 63l70 167h309q14 0 23 9t9 23z"/></svg></span></td></tr>
</tbody></table>
<div class="abs" style="left:256px;top:581px;white-space:nowrap;font-size:13px;color:#333;line-height:20px;word-spacing:.2px">显示第 1 到第 10 条记录，总共 257 条记录 每页显示</div>
<div class="abs gb" style="left:564px;top:577px;width:50px;height:31px;font-size:12px;line-height:29px;color:#444;padding-left:12px">10<svg class="abs" style="left:29px;top:13px" width="8" height="4" viewBox="0 0 8 4"><path d="M0 4h8l-4-4z" fill="#333"/></svg></div>
<div class="abs" style="left:618px;top:581px;white-space:nowrap;font-size:13px;color:#333;line-height:20px">条记录</div>
<div id="pg">
<span style="left:1128px;width:65px;border-radius:3px 0 0 3px">上一页</span><span class="cur" style="left:1192px;width:33px">1</span><span style="left:1224px;width:33px">2</span><span style="left:1256px;width:33px">3</span><span style="left:1288px;width:33px">4</span><span style="left:1320px;width:34px">5</span><span style="left:1353px;width:37px;background:#fff;color:#777">...</span><span style="left:1389px;width:40px">26</span><span style="left:1428px;width:65px;border-radius:0 3px 3px 0">下一页</span>
</div>
<div class="abs" style="left:1498px;top:575px;width:50px;height:31px;border:1px solid #d2d6de;background:#fff"></div>
<div class="abs gb" style="left:1553px;top:576px;width:50px;height:31px;font-size:12px;line-height:29px;text-align:center;color:#444">跳转</div>
<div id="wm2" class="abs" style="left:724px;top:409px;font-size:34px;font-weight:900;color:#eee;-webkit-text-stroke:1.600px #eee;mix-blend-mode:multiply;line-height:44px;white-space:nowrap;letter-spacing:7px;transform:skewX(-9deg);transform-origin:0 100%">刀客源码网</div>
<div id="wm1" class="abs" style="left:638px;top:408px;font-size:20px;line-height:28px;font-weight:700;color:rgba(75,75,75,.78);white-space:nowrap;font-family:'Noto Serif CJK SC','Liberation Sans',serif">流光坞<span style="font-family:'Liberation Sans',sans-serif;font-size:17.500px;font-weight:400;margin-left:8px;letter-spacing:-.1px;position:relative;top:-1px">liuguangwu.top</span></div>
</body>
</html>
